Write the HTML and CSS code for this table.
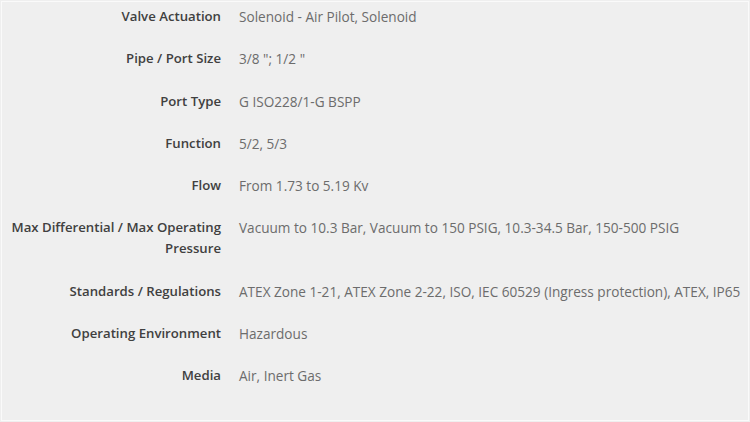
FILE: index.html
```html
<!DOCTYPE html>
<html>
<head>
<meta charset="utf-8">
<link rel="stylesheet" href="styles.css">
</head>
<body>
<div class="frame">
  <dl class="specs">
    <div class="row"><dt>Valve Actuation</dt><dd>Solenoid - Air Pilot, Solenoid</dd></div>
    <div class="row"><dt>Pipe / Port Size</dt><dd>3/8 "; 1/2 "</dd></div>
    <div class="row"><dt>Port Type</dt><dd>G ISO228/1-G BSPP</dd></div>
    <div class="row"><dt>Function</dt><dd>5/2, 5/3</dd></div>
    <div class="row"><dt>Flow</dt><dd>From 1.73 to 5.19 Kv</dd></div>
    <div class="row"><dt>Max Differential / Max Operating Pressure</dt><dd>Vacuum to 10.3 Bar, Vacuum to 150 PSIG, 10.3-34.5 Bar, 150-500 PSIG</dd></div>
    <div class="row"><dt>Standards / Regulations</dt><dd>ATEX Zone 1-21, ATEX Zone 2-22, ISO, IEC 60529 (Ingress protection), ATEX, IP65</dd></div>
    <div class="row"><dt>Operating Environment</dt><dd>Hazardous</dd></div>
    <div class="row"><dt>Media</dt><dd>Air, Inert Gas</dd></div>
  </dl>
</div>
</body>
</html>
```
FILE: styles.css
```css
html, body {
  margin: 0;
  padding: 0;
  background: #efefef;
}
body {
  width: 750px;
  height: 422px;
  overflow: hidden;
  font-family: "Open Sans", "Noto Sans", sans-serif;
}
.frame {
  box-sizing: border-box;
  margin: 1px;
  height: 420px;
  border: 1px solid #fafafa;
  background: #efefef;
}
.specs {
  margin: 0;
  padding: 4px 0 0 6px;
  display: flex;
  flex-direction: column;
  gap: 21.3px;
}
.row {
  display: grid;
  grid-template-columns: 213px 1fr;
  column-gap: 18px;
  line-height: 21px;
}
.row dt {
  text-align: right;
  color: #404040;
  font-weight: 600;
  font-size: 13.2px;
}
.row dd {
  margin: 0;
  color: #6c6c6c;
  font-size: 13.6px;
}
```
